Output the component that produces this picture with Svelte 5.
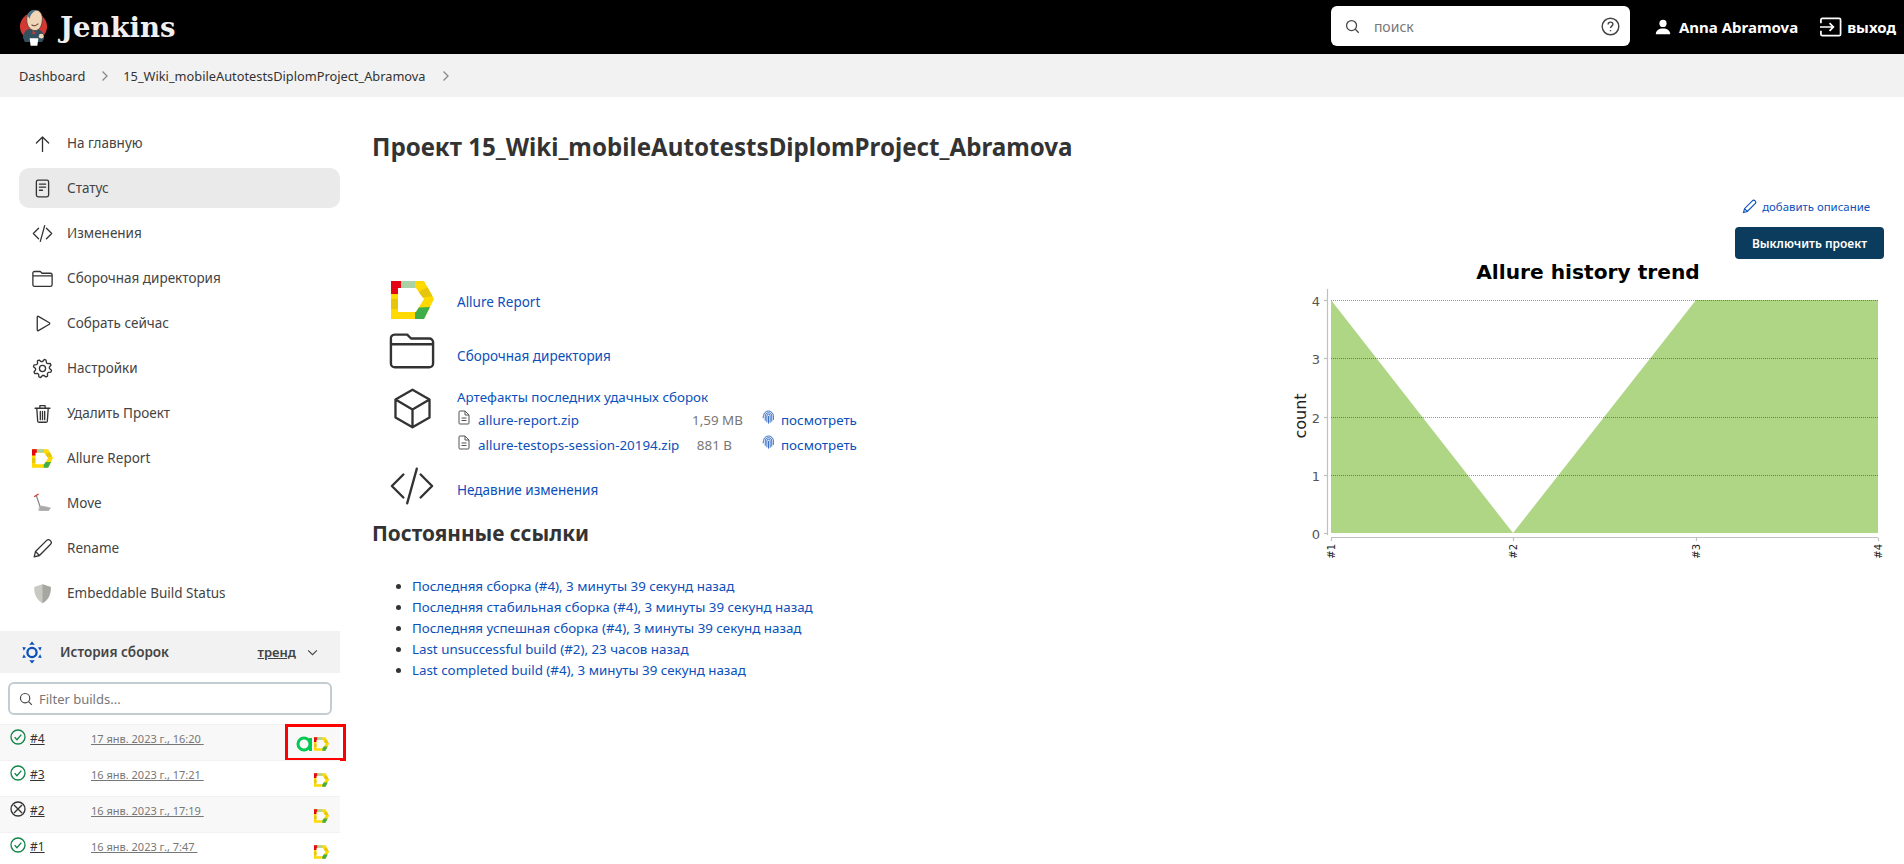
<script>
  const gear = (() => {
    let d = '';
    const n = 8;
    for (let i = 0; i < n * 4; i++) {
      const a = (i / (n * 4)) * Math.PI * 2;
      const r = i % 4 < 2 ? 10.5 : 8;
      const x = 12 + r * Math.cos(a + 0.2);
      const y = 12 + r * Math.sin(a + 0.2);
      d += (i ? 'L' : 'M') + x.toFixed(2) + ' ' + y.toFixed(2);
    }
    return d + 'Z';
  })();

  const nav = [
    ['up', 'На главную'],
    ['doc', 'Статус', true],
    ['code', 'Изменения'],
    ['folder', 'Сборочная директория'],
    ['play', 'Собрать сейчас'],
    ['gear', 'Настройки'],
    ['trash', 'Удалить Проект'],
    ['allure', 'Allure Report'],
    ['move', 'Move'],
    ['pencil', 'Rename'],
    ['shield', 'Embeddable Build Status']
  ];

  const builds = [
    { id: '#4', date: '17 янв. 2023 г., 16:20', ok: true, hl: true },
    { id: '#3', date: '16 янв. 2023 г., 17:21', ok: true },
    { id: '#2', date: '16 янв. 2023 г., 17:19', ok: false },
    { id: '#1', date: '16 янв. 2023 г., 7:47', ok: true }
  ];

  const perma = [
    'Последняя сборка (#4), 3 минуты 39 секунд назад',
    'Последняя стабильная сборка (#4), 3 минуты 39 секунд назад',
    'Последняя успешная сборка (#4), 3 минуты 39 секунд назад',
    'Last unsuccessful build (#2), 23 часов назад',
    'Last completed build (#4), 3 минуты 39 секунд назад'
  ];

  const artifacts = [
    { name: 'allure-report.zip', size: '1,59 MB' },
    { name: 'allure-testops-session-20194.zip', size: '881 B' }
  ];

  const grid = [0, 1, 2, 3, 4];
  const xs = [
    ['#1', 61],
    ['#2', 243],
    ['#3', 426],
    ['#4', 608]
  ];
  const yOf = (v) => Math.round(243 - v * 58.25) + 0.5;
</script>

{#snippet allure()}
  <svg class="fill" viewBox="0 0 43 38" aria-hidden="true">
    <path d="M0 0H33L43 18L33 38H0ZM7 7V31H25L33 18L25 7Z" fill="#ffd900" fill-rule="evenodd" />
    <path d="M0 0H10V7H7V13H0Z" fill="#e30613" />
    <path d="M10 0H24V7H10Z" fill="#a9d3a5" />
    <path d="M0 18H7V28H0Z" fill="#e5c60a" />
    <path d="M36.500 6.300L41.500 15.300L31.800 16.400L27.800 10.900Z" fill="#e5c60a" />
    <path d="M39 26L33 38H24V31H25L27.800 26.400Z" fill="#3fae49" />
  </svg>
{/snippet}

{#snippet icon(name)}
  {#if name === 'allure'}
    {@render allure()}
  {:else}
    <svg class="ico" viewBox="0 0 24 24" aria-hidden="true">
      {#if name === 'up'}
        <path d="M12 4.500V21M5 11.500L12 4.500L19 11.500" />
      {:else if name === 'doc'}
        <rect x="5" y="2.500" width="14" height="19" rx="2" />
        <path d="M8.500 7H15.500M8.500 10.500H15.500M8.500 14H12" />
      {:else if name === 'code'}
        <path d="M7.500 6L1.500 12L7.500 18M16.500 6L22.500 12L16.500 18M14.500 3L9.500 21" />
      {:else if name === 'folder'}
        <path d="M1 6.500V19A2 2 0 0 0 3 21H21A2 2 0 0 0 23 19V8A2 2 0 0 0 21 6H11.500L9.500 4H3A2 2 0 0 0 1 6.500ZM1 9H23" />
      {:else if name === 'play'}
        <path d="M6 4.500C6 3.800 6.700 3.400 7.300 3.800L19.800 11.200C20.400 11.600 20.400 12.400 19.800 12.800L7.300 20.200C6.700 20.600 6 20.200 6 19.500Z" />
      {:else if name === 'gear'}
        <path d={gear} /><circle cx="12" cy="12" r="3.500" />
      {:else if name === 'trash'}
        <path d="M5.500 6.500L6.500 21A1.500 1.500 0 0 0 8 22H16A1.500 1.500 0 0 0 17.500 21L18.500 6.500M3.500 6H20.500M9 6V3H15V6M9.500 9.500V19M12 9.500V19M14.500 9.500V19" />
      {:else if name === 'move'}
        <g class="tool">
          <path class="t1" d="M5 3L9 15" /><path class="t2" d="M3 4L7 1.500" />
          <path class="t3" d="M9 15H12L21 17L19 20H8Z" />
        </g>
      {:else if name === 'pencil'}
        <path d="M2.500 21.500L4 15.500L16.500 3A2.500 2.500 0 0 1 21 7.500L8.500 20ZM4 15.500L8.500 20" />
      {:else if name === 'shield'}
        <path class="sh" d="M12 1.500L21.500 4.500C21.500 13 19 19 12 23C5 19 2.500 13 2.500 4.500Z" />
        <path class="sh2" d="M12 1.500L21.500 4.500C21.500 13 19 19 12 23Z" />
      {/if}
    </svg>
  {/if}
{/snippet}

{#snippet circleIcon(ok)}
  <svg class="stat" class:ok class:bad={!ok} viewBox="0 0 24 24" aria-hidden="true">
    <circle cx="12" cy="12" r="10.500" />
    {#if ok}
      <path d="M7 12.500L10.500 16L17 8.500" />
    {:else}
      <path d="M6 6L18 18M18 6L6 18" />
    {/if}
  </svg>
{/snippet}

{#snippet finger()}
  <svg class="finger" viewBox="0 0 16 18" aria-hidden="true">
    <path d="M2 7A6 6 0 0 1 14 7V12M1.500 10V7M4 13V7A4 4 0 0 1 12 7V14M6 15V7A2 2 0 0 1 10 7V15.500M8 7V16.500" />
  </svg>
{/snippet}

<div class="page">
  <header class="top">
    <div class="brand">
      <svg class="butler" viewBox="0 0 30 40" aria-hidden="true">
        <circle cx="15" cy="19" r="14" fill="#d33833" />
        <path d="M4 30C5 23 9 21 15 21C21 21 26 24 26 31L24 35H6Z" fill="#335061" />
        <path d="M14 23L18 26L14 27Z" fill="#d33833" />
        <path d="M8 12C8 5 12 2 17 2C22 2 25 7 24 13C23.500 20 20 24 15 23C11 22 8 18 8 12Z" fill="#f0d6b7" stroke="#4a3a33" stroke-width=".8" />
        <path d="M9 8C10 3 14 1.500 18 2C15 4 12 6 11 11Z" fill="#49728b" />
        <path d="M13 17C15 19 18 18 20 16" fill="none" stroke="#6d4a3a" stroke-width="1.200" />
        <path d="M11 31H20L19 39H12Z" fill="#fff" />
        <circle cx="23" cy="29" r="2.500" fill="#f0d6b7" />
      </svg>
      <span class="wordmark">Jenkins</span>
    </div>
    <div class="search">
      <svg class="sglyph" viewBox="0 0 24 24" aria-hidden="true"><circle cx="10.500" cy="10.500" r="8" /><path d="M16.500 16.500L22 22" /></svg>
      <span class="ph">поиск</span>
      <svg class="help" viewBox="0 0 24 24" aria-hidden="true">
        <circle cx="12" cy="12" r="10.500" />
        <path d="M9 9.500C9 7.500 10.500 6.500 12 6.500C13.800 6.500 15 7.700 15 9.200C15 11.500 12 11.500 12 14" />
        <path d="M12 16.500V18" />
      </svg>
    </div>
    <div class="user">
      <svg class="person" viewBox="0 0 20 20" aria-hidden="true"><circle cx="10" cy="5.500" r="4.500" /><path d="M1 19C1 14.500 5 12 10 12C15 12 19 14.500 19 19Z" /></svg>
      <span>Anna Abramova</span>
    </div>
    <div class="exit">
      <svg class="exitico" viewBox="0 0 24 20" aria-hidden="true"><path d="M2 6V2.500C2 1.600 2.600 1 3.500 1H21C21.900 1 22.500 1.600 22.500 2.500V17.500C22.500 18.400 21.900 19 21 19H3.500C2.600 19 2 18.400 2 17.500V14M1 10H15M11 6L15 10L11 14" /></svg>
      <span>выход</span>
    </div>
  </header>

  <nav class="crumbs">
    <span>Dashboard</span>
    <svg class="chev" viewBox="0 0 8 12" aria-hidden="true"><path d="M1.500 1.500L6 6L1.500 10.500" /></svg>
    <span>15_Wiki_mobileAutotestsDiplomProject_Abramova</span>
    <svg class="chev" viewBox="0 0 8 12" aria-hidden="true"><path d="M1.500 1.500L6 6L1.500 10.500" /></svg>
  </nav>

  <div class="body">
    <aside class="side">
      <ul class="tasks">
        {#each nav as [ic, label, active]}
          <li class="task" class:active>
            <span class="tico">{@render icon(ic)}</span>
            <span>{label}</span>
          </li>
        {/each}
      </ul>

      <section class="history">
        <div class="hhead">
          <svg class="sun" viewBox="0 0 24 24" aria-hidden="true">
            <circle cx="12" cy="12" r="5" />
            <path class="tri" d="M12 0L15 3.500H9ZM12 24L9 20.500H15ZM1.500 6L5.500 6.500L3 10ZM22.500 6L21 10L18.500 6.500ZM1.500 18L3 14L5.500 17.500ZM22.500 18L18.500 17.500L21 14Z" />
          </svg>
          <span class="htitle">История сборок</span>
          <span class="trend">тренд</span>
          <svg class="down" viewBox="0 0 12 8" aria-hidden="true"><path d="M1 1.500L6 6.500L11 1.500" /></svg>
        </div>
        <div class="filter">
          <svg class="fglyph" viewBox="0 0 24 24" aria-hidden="true"><circle cx="10.500" cy="10.500" r="8" /><path d="M16.500 16.500L22 22" /></svg>
          <span>Filter builds...</span>
        </div>
        <div class="builds">
          {#each builds as b, i}
            <div class="build" class:odd={i % 2 === 0}>
              <span class="bstat">{@render circleIcon(b.ok)}</span>
              <span class="bid">{b.id}</span>
              <span class="bdate">{b.date}&nbsp;</span>
              <span class="bbadges" class:hl={b.hl}>
                {#if b.hl}
                  <svg class="greena" viewBox="0 0 18 16" aria-hidden="true"><circle cx="8" cy="8" r="6" /><path d="M14.500 2V15" /></svg>
                {/if}
                <span class="mini">{@render allure()}</span>
              </span>
            </div>
          {/each}
        </div>
      </section>
    </aside>

    <main class="main">
      <h1>Проект 15_Wiki_mobileAutotestsDiplomProject_Abramova</h1>

      <div class="columns">
        <div class="left">
          <div class="links">
            <div class="lrow r1">
              <span class="big">{@render allure()}</span>
              <a href="#r">Allure Report</a>
            </div>
            <div class="lrow r2">
              <span class="big line">{@render icon('folder')}</span>
              <a href="#w">Сборочная директория</a>
            </div>
            <div class="lrow r3">
              <span class="big cube">
                <svg class="ico" viewBox="0 0 24 24" aria-hidden="true"><path d="M12 1.500L21.500 7V17L12 22.500L2.500 17V7ZM2.500 7L12 12.500L21.500 7M12 12.500V22.500" /></svg>
              </span>
              <div class="arts">
                <a href="#a">Артефакты последних удачных сборок</a>
                {#each artifacts as f}
                  <div class="art">
                    <svg class="file" viewBox="0 0 12 15" aria-hidden="true"><path d="M1 2A1 1 0 0 1 2 1H7L11 5V13A1 1 0 0 1 10 14H2A1 1 0 0 1 1 13ZM7 1V5H11M3.500 8H8.500M3.500 10.500H8.500" /></svg>
                    <a class="fname" href="#f">{f.name}</a>
                    <span class="size">{f.size}</span>
                    {@render finger()}
                    <a class="view" href="#v">посмотреть</a>
                  </div>
                {/each}
              </div>
            </div>
            <div class="lrow r4">
              <span class="big line code">{@render icon('code')}</span>
              <a href="#c">Недавние изменения</a>
            </div>
          </div>

          <h2>Постоянные ссылки</h2>
          <ul class="perma">
            {#each perma as p}
              <li><a href="#p">{p}</a></li>
            {/each}
          </ul>
        </div>

        <div class="right">
          <div class="add">
            <svg class="pen" viewBox="0 0 24 24" aria-hidden="true"><path d="M2.500 21.500L4 15.500L16.500 3A2.500 2.500 0 0 1 21 7.500L8.500 20ZM4 15.500L8.500 20" /></svg>
            <a href="#d">добавить описание</a>
          </div>
          <button class="off" type="button">Выключить проект</button>
          <svg class="chart" viewBox="0 0 620 340" aria-label="Allure history trend">
            <g transform="translate(5 0)">
              <text class="ctitle" x="318" y="-11" text-anchor="middle">Allure history trend</text>
              <path d="M61 10L243 243L426 10H608V243H61Z" fill="#afd685" />
              {#each grid as v}
                {#if v > 0}
                  <line class="gl" x1="61" x2="608" y1={yOf(v)} y2={yOf(v)} />
                {/if}
                <line class="tk" x1="54" x2="57" y1={yOf(v)} y2={yOf(v)} />
                <text class="ylab" x="50" y={yOf(v) + 5} text-anchor="end">{v}</text>
              {/each}
              <line class="ax" x1="57.500" x2="57.500" y1="-1" y2="245" />
              <line class="ax" x1="61" x2="608" y1="247.500" y2="247.500" />
              {#each xs as [l, x]}
                <line class="tk" x1={x + 0.5} x2={x + 0.5} y1="248" y2="251" />
                <text class="xlab" transform="translate({x + 4} 254) rotate(-90)" text-anchor="end">{l}</text>
              {/each}
              <text class="ylabel" transform="translate(36 126) rotate(-90)" text-anchor="middle">count</text>
            </g>
          </svg>
        </div>
      </div>
    </main>
  </div>
</div>

<style>
  :global(body) {
    margin: 0;
    background: #fff;
  }
  .page {
    width: 1904px;
    height: 864px;
    overflow: hidden;
    font-family: "Noto Sans", "Open Sans", sans-serif;
    font-size: 13px;
    color: #333;
    display: flex;
    flex-direction: column;
  }
  a {
    color: #0b50ba;
    text-decoration: none;
  }
  svg {
    display: block;
    flex: none;
  }
  .top {
    height: 54px;
    flex: none;
    background: #000;
    color: #fff;
    display: flex;
    align-items: center;
    padding: 0 8px 0 19px;
    box-sizing: border-box;
  }
  .brand {
    display: flex;
    align-items: center;
    gap: 12px;
    margin-right: auto;
  }
  .butler {
    width: 29px;
    height: 39px;
  }
  .wordmark {
    font-family: "DejaVu Serif", serif;
    font-weight: 700;
    font-size: 27.500px;
    color: #f0f0f0;
  }
  .search {
    width: 299px;
    height: 40px;
    margin-bottom: 2px;
    background: #fff;
    border-radius: 6px;
    display: flex;
    align-items: center;
    padding: 0 10px 0 14px;
    box-sizing: border-box;
    color: #777;
    font-size: 14px;
  }
  .sglyph {
    width: 15px;
    height: 15px;
    fill: none;
    stroke: #444;
    stroke-width: 2;
    margin-right: 14px;
  }
  .ph {
    flex: 1;
  }
  .help {
    width: 19px;
    height: 19px;
    fill: none;
    stroke: #444;
    stroke-width: 1.800;
  }
  .user {
    display: flex;
    align-items: center;
    gap: 8px;
    margin-left: 25px;
    font-weight: 700;
    font-size: 15px;
  }
  .person {
    width: 16px;
    height: 16px;
    fill: #fff;
  }
  .exit {
    display: flex;
    align-items: center;
    gap: 5px;
    margin-left: 21px;
    font-weight: 700;
    font-size: 15px;
  }
  .exitico {
    width: 23px;
    height: 20px;
    fill: none;
    stroke: #fff;
    stroke-width: 1.800;
  }
  .crumbs {
    height: 43px;
    flex: none;
    background: #f2f2f2;
    display: flex;
    align-items: center;
    padding-left: 19px;
    font-size: 12.800px;
    color: #333;
  }
  .chev {
    width: 8px;
    height: 12px;
    margin: 0 14px 0 16px;
    fill: none;
    stroke: #888;
    stroke-width: 1.300;
  }
  .body {
    display: flex;
    flex: 1;
    min-height: 0;
  }
  .side {
    width: 340px;
    flex: none;
    padding-top: 26px;
  }
  .tasks {
    list-style: none;
    margin: 0 0 18px;
    padding: 0 0 0 19px;
    display: flex;
    flex-direction: column;
    gap: 5px;
  }
  .task {
    height: 40px;
    display: flex;
    align-items: center;
    padding-left: 13px;
    border-radius: 10px;
    font-size: 13.500px;
    color: #444;
  }
  .task.active {
    background: #eaeaea;
  }
  .tico {
    width: 21px;
    height: 22px;
    margin-right: 14px;
    display: flex;
    align-items: center;
    justify-content: center;
  }
  .tico :global(svg) {
    width: 21px;
    height: 21px;
  }
  .ico {
    fill: none;
    stroke: #333;
    stroke-width: 1.500;
    stroke-linecap: round;
    stroke-linejoin: round;
  }
  .tool .t1 {
    stroke: #888;
    stroke-width: 1.500;
  }
  .tool .t2 {
    stroke: #d33;
    stroke-width: 1.500;
  }
  .tool .t3 {
    fill: #aaa;
    stroke: #999;
    stroke-width: .6;
  }
  .sh {
    fill: #c9c9c4;
    stroke: none;
  }
  .sh2 {
    fill: #a7a7a2;
    stroke: none;
  }
  .hhead {
    height: 42px;
    background: #f2f2f2;
    display: flex;
    align-items: center;
    padding: 0 21px 0 21px;
    color: #444;
    font-weight: 600;
  }
  .sun {
    width: 22px;
    height: 23px;
    margin-right: 17px;
    fill: none;
  }
  .sun circle {
    stroke: #0b50ba;
    stroke-width: 2.500;
  }
  .sun .tri {
    fill: #0b50ba;
  }
  .htitle {
    flex: 1;
    font-size: 13.500px;
  }
  .trend {
    text-decoration: underline;
    font-size: 13px;
    margin-right: 8px;
  }
  .down {
    width: 11px;
    height: 7px;
    fill: none;
    stroke: #444;
    stroke-width: 1.300;
    margin: 0 1px 0 3px;
  }
  .filter {
    margin: 9px 8px 9px 8px;
    height: 33px;
    box-sizing: border-box;
    border: 2px solid #c3ccd1;
    border-radius: 6px;
    display: flex;
    align-items: center;
    padding-left: 9px;
    color: #777;
    font-size: 13px;
  }
  .fglyph {
    width: 14px;
    height: 14px;
    fill: none;
    stroke: #444;
    stroke-width: 2;
    margin-right: 6px;
  }
  .build {
    height: 36px;
    box-sizing: border-box;
    display: flex;
    align-items: flex-start;
    position: relative;
    border-top: 1px solid #f2f2f2;
  }
  .build.odd {
    background: #f8f8f8;
  }
  .bstat {
    width: 16px;
    margin: 4px 4px 0 10px;
  }
  .stat {
    width: 16px;
    height: 16px;
    fill: none;
    stroke-width: 2;
  }
  .stat.ok {
    stroke: #138347;
  }
  .stat.bad {
    stroke: #333;
  }
  .bid {
    width: 61px;
    margin-top: 5px;
    font-size: 12px;
    color: #333;
    text-decoration: underline;
  }
  .bdate {
    flex: 1;
    margin-top: 6px;
    font-size: 11px;
    color: #777;
    text-decoration: underline;
  }
  .bbadges {
    width: 61px;
    height: 37px;
    margin-top: -1px;
    box-sizing: border-box;
    display: flex;
    align-items: center;
    justify-content: flex-end;
    padding: 0 17px 0 0;
    margin-right: -6px;
    position: relative;
  }
  .bbadges.hl {
    outline: 3px solid #f00;
    outline-offset: -3px;
  }
  .mini {
    width: 15px;
    height: 14px;
    margin-top: 3px;
  }
  .mini :global(svg) {
    width: 15px;
    height: 14px;
  }
  .greena {
    width: 18px;
    height: 16px;
    margin-top: 2px;
    fill: none;
    stroke: #00c853;
    stroke-width: 3;
  }
  .main {
    flex: 1;
    min-width: 0;
    padding: 0 20px 0 33px;
  }
  h1 {
    margin: 32px 0 0 -1px;
    font-size: 24.150px;
    line-height: 36px;
    font-weight: 700;
    color: #333;
    white-space: nowrap;
  }
  .columns {
    display: flex;
    justify-content: space-between;
  }
  .left {
    padding-top: 116px;
  }
  .right {
    width: 620px;
    margin-right: -1px;
    padding-top: 31px;
    display: flex;
    flex-direction: column;
    align-items: flex-end;
  }
  .lrow {
    display: flex;
    align-items: flex-start;
    margin-left: -1px;
  }
  .big {
    width: 44px;
    margin: 0 23px 0 18px;
    display: block;
  }
  .big :global(svg) {
    width: 43px;
    height: 38px;
    margin-left: 1px;
  }
  .big.line :global(svg) {
    width: 46px;
    height: 46px;
    margin: -7px 0 0 -1px;
    stroke-width: 1.250;
  }
  .big.code :global(svg) {
    margin-top: -5px;
  }
  .r1 {
    height: 53px;
    font-size: 13.500px;
    line-height: 42px;
  }
  .r2 {
    height: 53px;
    line-height: 44px;
    font-size: 13.500px;
  }
  .r3 {
    height: 81px;
    font-size: 13.400px;
  }
  .cube :global(svg) {
    width: 43px;
    height: 43px;
    stroke-width: 1.300;
  }
  .arts {
    line-height: 20px;
  }
  .art {
    display: flex;
    align-items: center;
    height: 25px;
    font-size: 13.400px;
  }
  .file {
    width: 12px;
    height: 15px;
    margin: 0 8px 4px 1px;
    fill: none;
    stroke: #555;
    stroke-width: 1;
  }
  .fname {
    width: 214px;
    white-space: nowrap;
  }
  .size {
    width: 40px;
    text-align: right;
    color: #777;
    white-space: nowrap;
  }
  .finger {
    width: 13px;
    height: 15px;
    margin: 0 6px 4px 30px;
    fill: none;
    stroke: #0b50ba;
    stroke-width: 1;
  }
  .r4 {
    height: 50px;
    font-size: 13.500px;
    line-height: 44px;
  }
  h2 {
    margin: 0 0 0 -1px;
    font-size: 20.800px;
    line-height: 30px;
    font-weight: 700;
    color: #333;
  }
  .perma {
    margin: 27.500px 0 0;
    padding-left: 39px;
    font-size: 13.350px;
    line-height: 21.200px;
    color: #333;
  }
  .add {
    display: flex;
    align-items: center;
    gap: 5px;
    font-size: 11.400px;
    height: 20px;
    margin-right: 15px;
  }
  .pen {
    width: 15px;
    height: 15px;
    fill: none;
    stroke: #0b50ba;
    stroke-width: 1.800;
  }
  .off {
    margin-top: 11px;
    margin-right: 1px;
    height: 32px;
    width: 149px;
    border: 0;
    border-radius: 4px;
    background: #0b3c5d;
    color: #fff;
    font: 600 12px "Noto Sans", sans-serif;
    padding: 0;
  }
  .chart {
    width: 620px;
    height: 340px;
    margin-top: 31px;
    overflow: visible;
  }
  .ctitle {
    font: 700 20.200px "DejaVu Sans", sans-serif;
    fill: #000;
  }
  .gl {
    stroke: #000;
    stroke-opacity: .4;
    stroke-dasharray: 1 1;
    shape-rendering: crispEdges;
  }
  .tk,
  .ax {
    stroke: #c0c0c0;
    stroke-width: 1.200;
  }
  .ylab {
    font: 13px "DejaVu Sans", sans-serif;
    fill: #555;
  }
  .xlab {
    font: 10px "DejaVu Sans", sans-serif;
    fill: #222;
  }
  .ylabel {
    font: 16px "DejaVu Sans", sans-serif;
    fill: #222;
  }
</style>
